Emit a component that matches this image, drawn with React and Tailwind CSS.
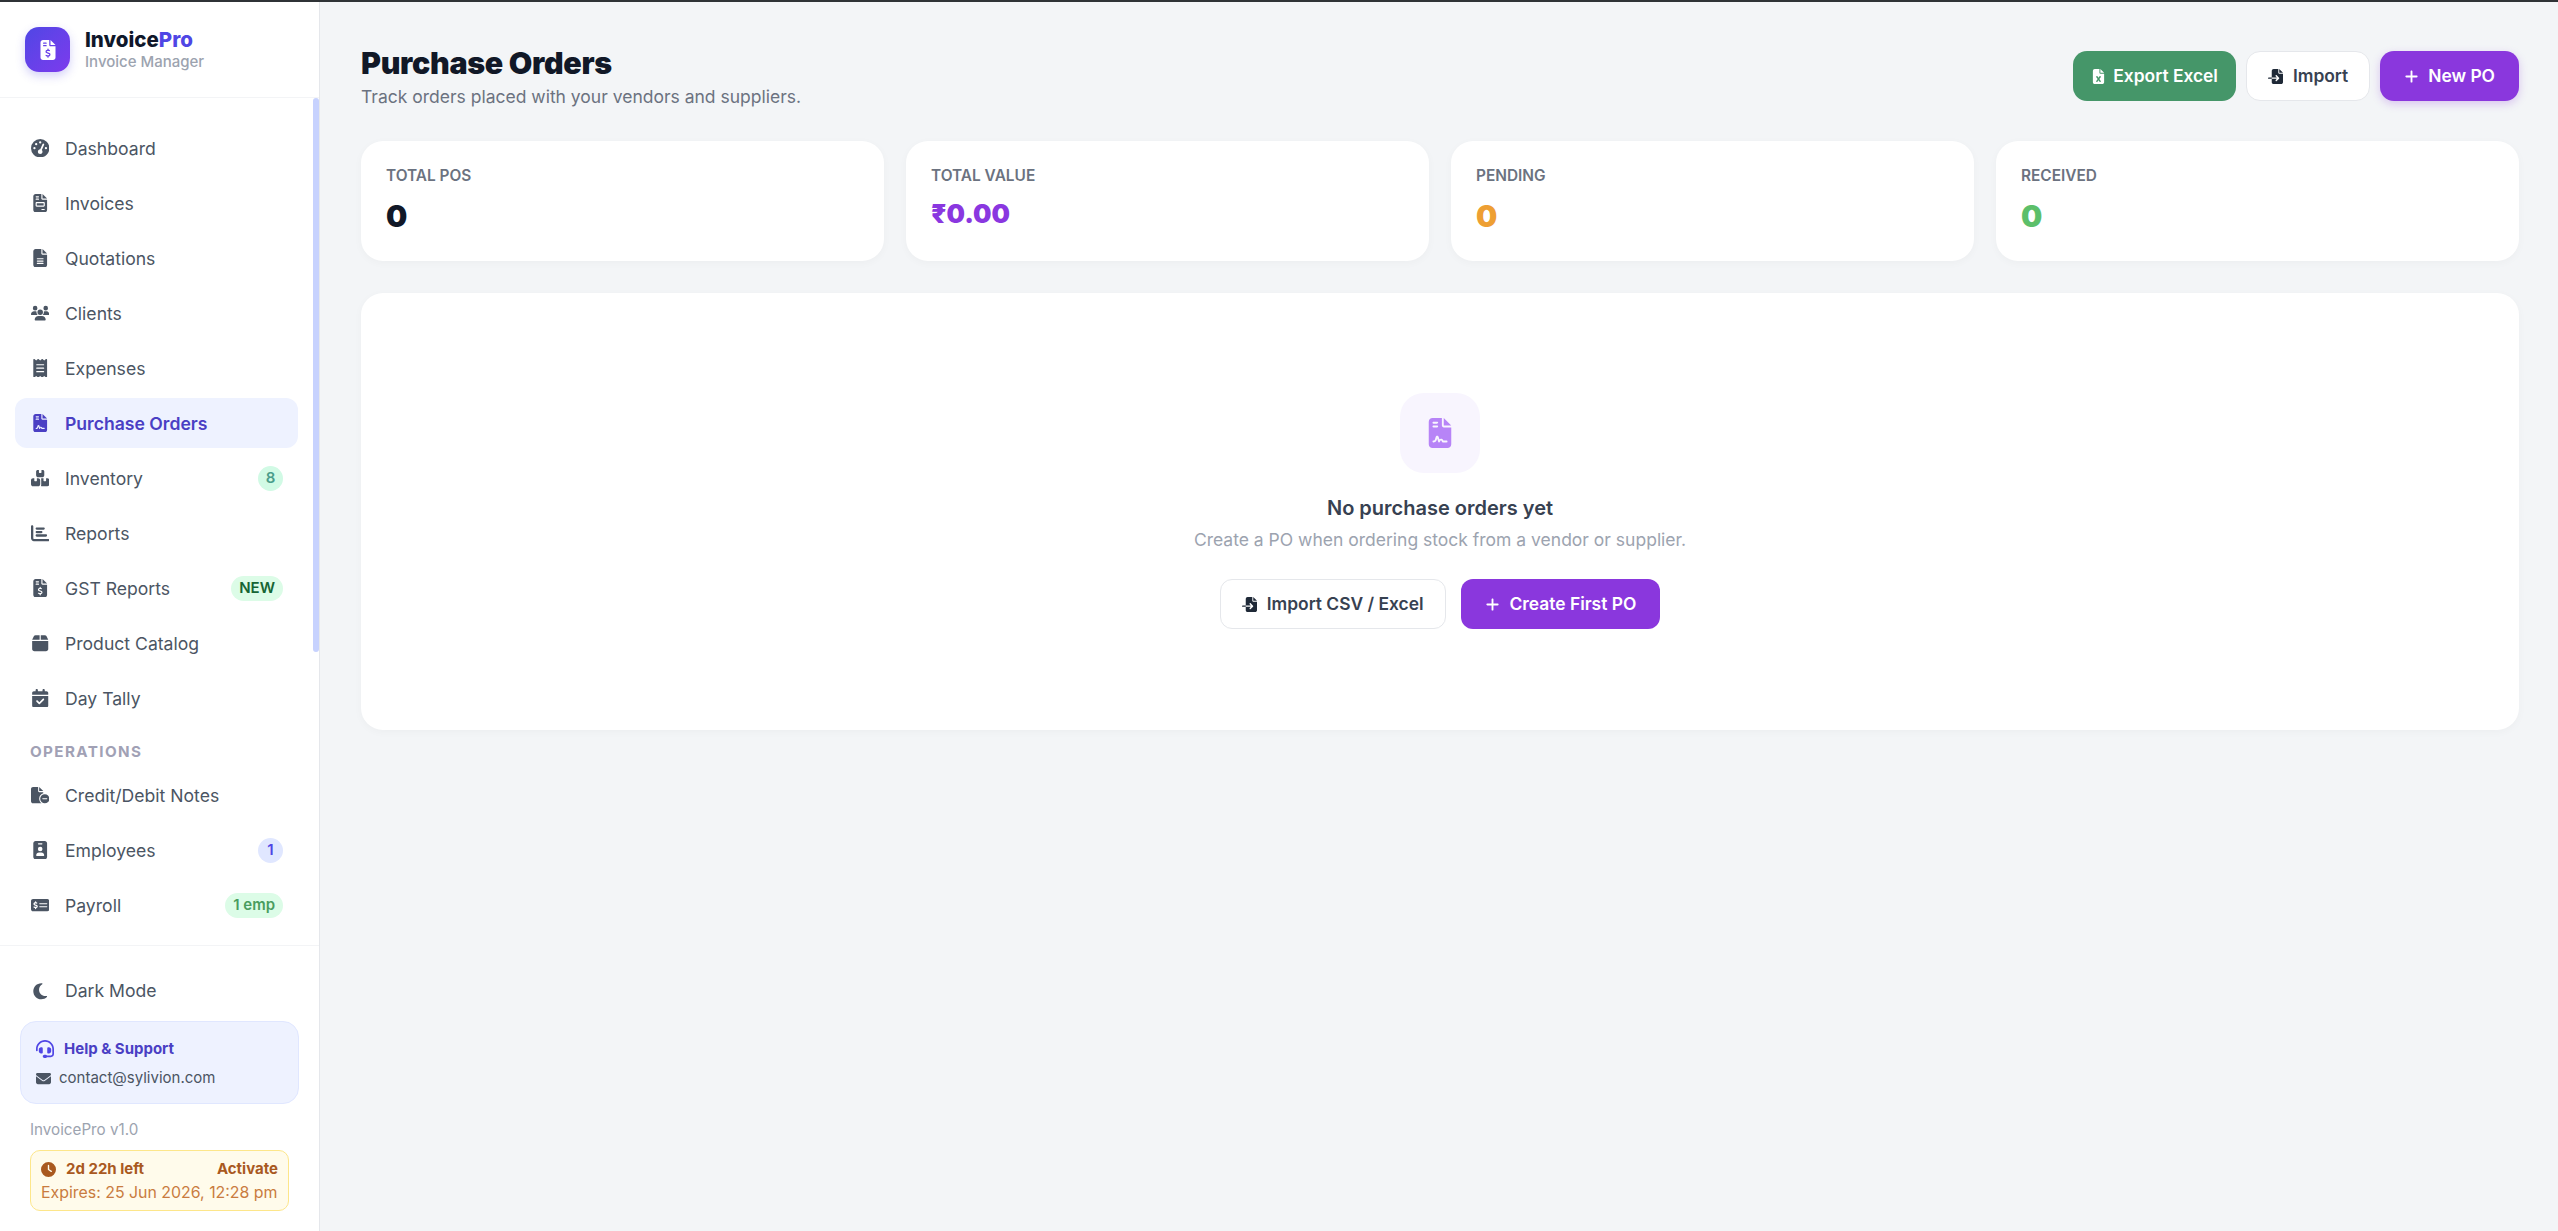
import React from "react";
import {
  FaGaugeHigh, FaFileInvoice, FaFileLines, FaUsers, FaReceipt, FaFileContract, FaBoxesStacked, FaChartBar,
  FaFileInvoiceDollar, FaBox, FaCalendarCheck, FaIdBadge, FaMoneyCheckDollar, FaMoon, FaHeadset, FaEnvelope, FaClock,
  FaFileExcel, FaFileImport, FaPlus, FaFileCircleMinus,
} from "react-icons/fa6";

const Item = ({ icon: Icon, label, active, badge }) => (
  <div className={`flex h-[50px] shrink-0 items-center gap-[14px] rounded-[12px] pl-[14px] pr-[15px] ${active ? "bg-[#eef2ff] font-semibold text-[#4a3fc4]" : "text-[#4b5563]"}`}>
    <span className="flex w-[22px] shrink-0 justify-center text-[18.4px]"><Icon /></span>
    <span className="flex-1 pt-[2px] text-[17.6px] leading-none">{label}</span>
    {badge}
  </div>
);

const Badge = ({ className, children }) => (
  <span className={`flex h-[25px] min-w-[25px] items-center justify-center rounded-full text-[15px] font-semibold ${className}`}>{children}</span>
);

const Stat = ({ label, value, className }) => (
  <div className="flex h-[120px] flex-col rounded-[22px] bg-white px-[25px] pt-[25px] shadow-[0_2px_8px_rgba(0,0,0,0.03)]">
    <div className="text-[15.4px] font-semibold leading-[20px] text-[#6b7280]">{label}</div>
    <div className={`mt-[10px] font-black ${className}`}>{value}</div>
  </div>
);

export default function App() {
  return (
    <div className="flex h-[1231px] w-full flex-col overflow-hidden bg-[#f3f5f7] font-['Inter','Liberation_Sans',sans-serif]">
      <div className="h-[2px] shrink-0 bg-[#2f3336]" />
      <div className="flex min-h-0 flex-1">
        <aside className="relative flex w-[320px] shrink-0 flex-col border-r border-[#e5e7eb] bg-white">
          <div className="flex h-[96px] shrink-0 items-center gap-[15px] border-b border-[#f3f4f6] pl-[25px]">
            <div className="flex h-[45px] w-[45px] items-center justify-center rounded-[14px] bg-gradient-to-br from-[#4f46e5] to-[#7c3aed] text-[20px] text-white shadow-[0_4px_10px_rgba(79,70,229,0.25)]">
              <FaFileInvoiceDollar />
            </div>
            <div>
              <div className="text-[20.5px] font-extrabold leading-[24px] text-[#0f172a]">Invoice<span className="text-[#4f46e5]">Pro</span></div>
              <div className="text-[15px] font-medium leading-[20px] text-[#9ca3af]">Invoice Manager</div>
            </div>
          </div>
          <nav className="flex min-h-0 flex-1 flex-col gap-[5px] overflow-hidden pl-[15px] pr-[21px] pt-[25px]">
            <Item icon={FaGaugeHigh} label="Dashboard" />
            <Item icon={FaFileInvoice} label="Invoices" />
            <Item icon={FaFileLines} label="Quotations" />
            <Item icon={FaUsers} label="Clients" />
            <Item icon={FaReceipt} label="Expenses" />
            <Item icon={FaFileContract} label="Purchase Orders" active />
            <Item icon={FaBoxesStacked} label="Inventory" badge={<Badge className="bg-[#d1fae5] px-[7px] text-[#4a9d8a]">8</Badge>} />
            <Item icon={FaChartBar} label="Reports" />
            <Item icon={FaFileInvoiceDollar} label="GST Reports" badge={<Badge className="bg-[#dcfce7] px-[8px] text-[#166534]">NEW</Badge>} />
            <Item icon={FaBox} label="Product Catalog" />
            <Item icon={FaCalendarCheck} label="Day Tally" />
            <div className="mb-[3px] mt-[14px] pl-[15px] text-[15.2px] font-bold leading-[20px] tracking-[1.4px] text-[#a1a1b5]">OPERATIONS</div>
            <Item icon={FaFileCircleMinus} label="Credit/Debit Notes" />
            <Item icon={FaIdBadge} label="Employees" badge={<Badge className="bg-[#e0e7ff] px-[7px] text-[#4f46e5]">1</Badge>} />
            <Item icon={FaMoneyCheckDollar} label="Payroll" badge={<Badge className="bg-[#dcfce7] px-[8px] text-[#4a9d5f]">1 emp</Badge>} />
          </nav>
          <div className="absolute right-0 top-[96px] h-[554px] w-[6px] rounded-full bg-[#c7d2fe]" />
          <div className="flex h-[286px] shrink-0 flex-col border-t border-[#f3f4f6] px-[20px]">
            <div className="mt-[20px] flex h-[50px] shrink-0 items-center gap-[14px] pl-[9px] text-[#4b5563]">
              <span className="flex w-[22px] justify-center text-[18.4px]"><FaMoon /></span>
              <span className="text-[17.6px] leading-none">Dark Mode</span>
            </div>
            <div className="mt-[5px] h-[83px] w-[279px] rounded-[16px] border border-[#e0e7ff] bg-[#eef2ff] pl-[15px] pt-[17px]">
              <div className="flex items-center gap-[10px] text-[15px] font-bold leading-[20px] text-[#4a3fc4]"><FaHeadset className="text-[18px] text-[#4f46e5]" />Help &amp; Support</div>
              <div className="mt-[9px] flex items-center gap-[8px] text-[15px] leading-[20px] text-[#4b5563]"><FaEnvelope className="text-[15px]" />contact@sylivion.com</div>
            </div>
            <div className="mt-[16px] pl-[10px] text-[15.2px] leading-[20px] text-[#9ca3af]">InvoicePro v1.0</div>
            <div className="ml-[10px] mt-[10px] h-[61px] w-[259px] rounded-[10px] border border-[#fde68a] bg-[#fffbeb] px-[10px] pt-[8px]">
              <div className="flex items-center text-[15px] font-bold leading-[20px] text-[#a9591f]">
                <FaClock className="mr-[10px] text-[15px]" /><span className="flex-1">2d 22h left</span><span>Activate</span>
              </div>
              <div className="mt-[4px] whitespace-nowrap text-[15.9px] leading-[20px] text-[#c97b3f]">Expires: 25 Jun 2026, 12:28 pm</div>
            </div>
          </div>
        </aside>
        <main className="flex min-w-0 flex-1 flex-col pl-[41px] pr-[39px] pt-[36px]">
          <div className="flex h-[65px] items-start justify-between">
            <div className="pt-[5px]">
              <h1 className="text-[30.4px] font-black leading-[40px] tracking-[-0.3px] text-[#111827]">Purchase Orders</h1>
              <p className="mt-[2px] text-[17.5px] leading-[24px] text-[#6b7280]">Track orders placed with your vendors and suppliers.</p>
            </div>
            <div className="flex items-center gap-[10px] pt-[13px]">
              <button className="flex h-[50px] items-center gap-[7px] rounded-[14px] bg-[#459669] px-[18px] text-[17.4px] font-semibold text-white"><FaFileExcel className="text-[15px]" />Export Excel</button>
              <button className="flex h-[50px] items-center gap-[10px] rounded-[14px] border border-[#e5e7eb] bg-white px-[21px] text-[17.4px] font-semibold text-[#374151]"><FaFileImport className="text-[15px] text-[#1f2937]" />Import</button>
              <button className="flex h-[50px] items-center gap-[9px] rounded-[14px] bg-[#8a37dd] px-[24px] text-[17.4px] font-semibold text-white shadow-[0_3px_8px_rgba(138,55,221,0.25)]"><FaPlus className="text-[15px]" />New PO</button>
            </div>
          </div>
          <div className="mt-[38px] grid grid-cols-4 gap-[22px]">
            <Stat label="TOTAL POS" value="0" className="text-[30px] leading-[40px] text-[#111827]" />
            <Stat label="TOTAL VALUE" value="₹0.00" className="text-[26px] leading-[36px] text-[#8a37e0]" />
            <Stat label="PENDING" value="0" className="text-[30px] leading-[40px] text-[#ee9f33]" />
            <Stat label="RECEIVED" value="0" className="text-[30px] leading-[40px] text-[#5cbf6a]" />
          </div>
          <div className="mt-[32px] flex h-[437px] flex-col items-center rounded-[22px] bg-white pt-[100px] shadow-[0_2px_8px_rgba(0,0,0,0.03)]">
            <div className="flex h-[80px] w-[80px] items-center justify-center rounded-[24px] bg-[#f8f5fe] text-[30px] text-[#b784f7]"><FaFileContract /></div>
            <div className="mt-[21px] text-[20px] font-semibold leading-[28px] text-[#374151]">No purchase orders yet</div>
            <div className="mt-[6px] text-[17.5px] leading-[24px] text-[#9ca3af]">Create a PO when ordering stock from a vendor or supplier.</div>
            <div className="mt-[27px] flex gap-[15px]">
              <button className="flex h-[50px] items-center gap-[10px] rounded-[12px] border border-[#e5e7eb] bg-white px-[21px] text-[17.4px] font-semibold text-[#374151]"><FaFileImport className="text-[15px] text-[#1f2937]" />Import CSV / Excel</button>
              <button className="flex h-[50px] items-center gap-[10px] rounded-[12px] bg-[#8a37dd] px-[24px] text-[17.4px] font-semibold text-white"><FaPlus className="text-[15px]" />Create First PO</button>
            </div>
          </div>
        </main>
      </div>
    </div>
  );
}
